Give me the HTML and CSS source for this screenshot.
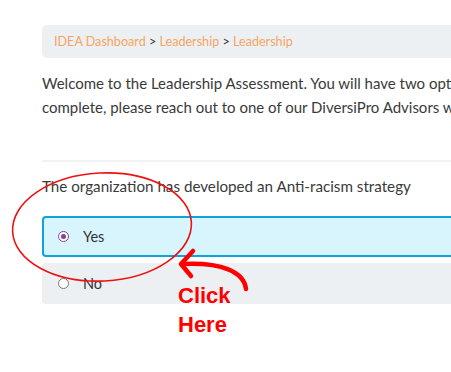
FILE: index.html
```html
<!DOCTYPE html>
<html lang="en">
<head>
<meta charset="utf-8">
<title>Leadership Assessment</title>
<link rel="stylesheet" href="styles.css">
</head>
<body>
<div class="page">
  <nav class="crumbs">
    <a href="#">IDEA Dashboard</a> <span class="sep">&gt;</span> <a href="#">Leadership</a> <span class="sep">&gt;</span> <a href="#">Leadership</a>
  </nav>
  <p class="intro">Welcome to the Leadership Assessment. You will have two options to complete this assessment. If you have questions or need help to<br>complete, please reach out to one of our DiversiPro Advisors who will be happy to assist you.</p>
  <hr class="rule">
  <div class="question">The organization has developed an Anti-racism strategy</div>
  <div class="options">
    <label class="option selected"><span class="radio checked"></span><span class="opt-text">Yes</span></label>
    <label class="option"><span class="radio"></span><span class="opt-text">No</span></label>
  </div>
</div>
<div class="annotation">
  <svg class="marks" width="451" height="372" viewBox="0 0 451 372">
    <ellipse cx="102" cy="227" rx="89.5" ry="54" transform="rotate(-3 102 227)" fill="none" stroke="#ee1111" stroke-width="1.6"/>
    <path d="M246 289 C 244 272, 222 262, 182 264" fill="none" stroke="#ff0000" stroke-width="4.5" stroke-linecap="round"/>
    <path d="M193 251 L 181 264 L 191 276" fill="none" stroke="#ff0000" stroke-width="4.5" stroke-linecap="round" stroke-linejoin="round"/>
  </svg>
  <div class="click">Click<br>Here</div>
</div>
</body>
</html>
```

FILE: styles.css
```css
html, body {
  margin: 0;
  padding: 0;
  background: #ffffff;
  overflow: hidden;
}
body {
  width: 451px;
  height: 372px;
  position: relative;
  font-family: Lato, "Open Sans", sans-serif;
  color: #3a3a3a;
}
.page {
  padding: 25px 0 0 42px;
  width: 760px;
}
.crumbs {
  background: #edf0f3;
  border-radius: 5px;
  height: 33px;
  line-height: 33px;
  padding: 0 12px;
  font-size: 12.6px;
  color: #333;
  white-space: nowrap;
}
.crumbs a {
  color: #f7a462;
  text-decoration: none;
}
.crumbs .sep {
  color: #333;
}
.intro {
  margin: 13px 0 0;
  font-size: 15px;
  line-height: 24px;
  white-space: nowrap;
  color: #3a3a3a;
}
.rule {
  margin: 41px 0 0;
  border: 0;
  border-top: 2px solid #f1f2f4;
  height: 0;
}
.question {
  margin-top: 14px;
  font-size: 15.2px;
  line-height: 20px;
  color: #3a3a3a;
}
.options {
  margin-top: 20px;
  display: flex;
  flex-direction: column;
  gap: 6px;
}
.option {
  display: flex;
  align-items: center;
  height: 41px;
  box-sizing: border-box;
  border: 2px solid transparent;
  border-radius: 4px;
  background: #edf0f3;
  padding-left: 14px;
  font-size: 14.5px;
  color: #333;
}
.option.selected {
  background: #d8f4fc;
  border-color: #0ea2de;
}
.radio {
  width: 11px;
  height: 11px;
  box-sizing: border-box;
  border-radius: 50%;
  border: 1px solid #777;
  background: #fff;
  margin-right: 14px;
  position: relative;
}
.radio.checked {
  border-color: #8b3f97;
}
.radio.checked::after {
  content: "";
  position: absolute;
  left: 2px;
  top: 2px;
  width: 5px;
  height: 5px;
  border-radius: 50%;
  background: #8b3f97;
}
.annotation {
  position: absolute;
  left: 0;
  top: 0;
  width: 451px;
  height: 372px;
  pointer-events: none;
}
.marks {
  position: absolute;
  left: 0;
  top: 0;
}
.click {
  position: absolute;
  left: 178px;
  top: 281px;
  font-family: "Liberation Sans", Arial, sans-serif;
  font-weight: bold;
  font-size: 22px;
  line-height: 29px;
  color: #ff0000;
}
```
